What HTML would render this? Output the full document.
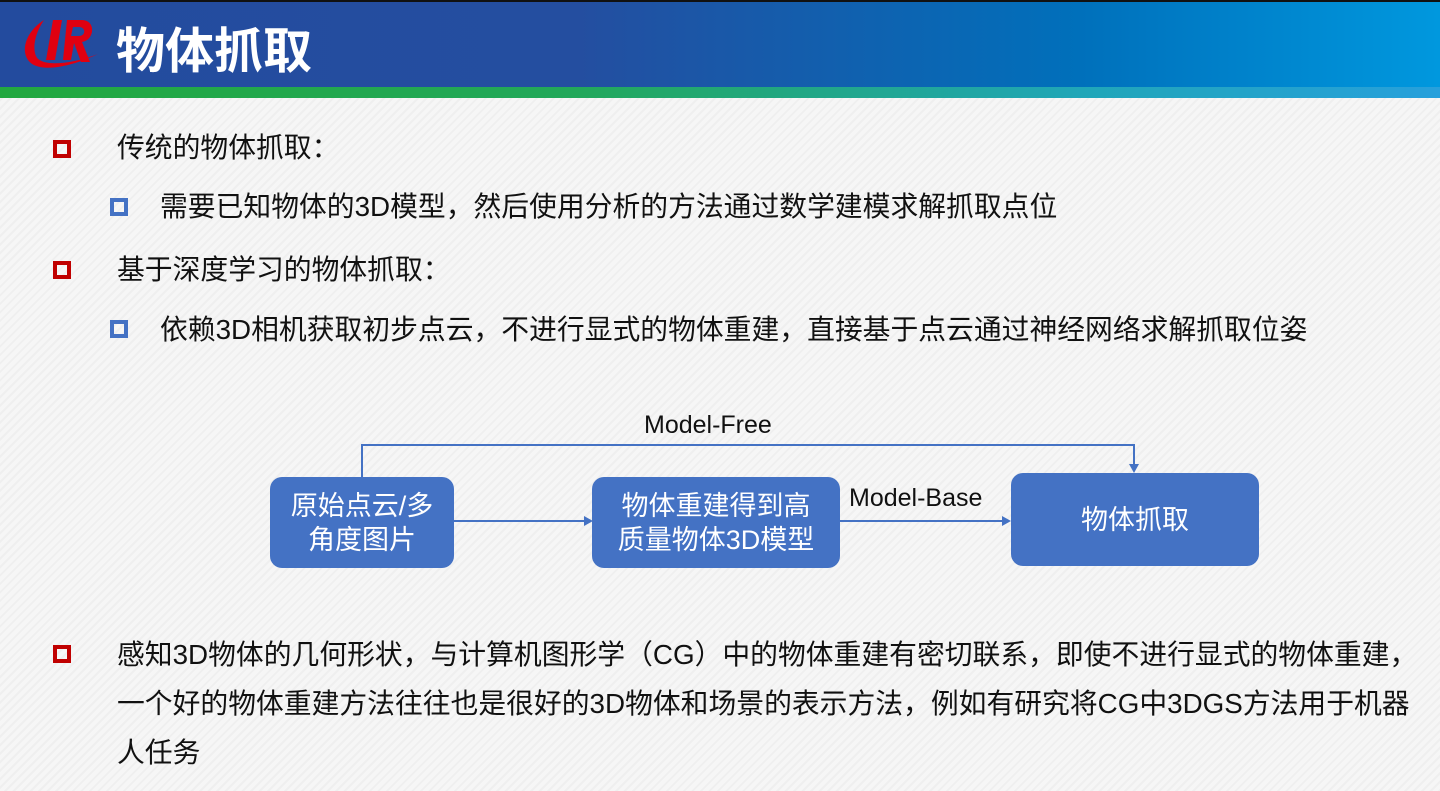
<!DOCTYPE html>
<html><head><meta charset="utf-8"><style>
*{margin:0;padding:0;box-sizing:border-box}
body{width:1440px;height:791px;overflow:hidden;position:relative;font-family:"Liberation Sans","Noto Sans CJK SC",sans-serif;background:repeating-linear-gradient(135deg,#f6f6f6 0 4px,#efefef 4px 6px);color:#111}
.hdr{position:absolute;left:0;top:0;width:1440px;height:88px;background:linear-gradient(90deg,#234b9e 0%,#244ea0 40%,#0070bb 75%,#0098de 100%);border-top:2px solid #111}
.grn{position:absolute;left:0;top:87px;width:1440px;height:11px;background:linear-gradient(90deg,#22a83f 0%,#22a85a 40%,#20a6b8 75%,#27a0dc 100%)}
.title{position:absolute;left:116px;top:12px;font-size:49px;font-weight:bold;color:#fff;letter-spacing:0px;font-family:"Noto Sans CJK SC",sans-serif}
.t{position:absolute;font-size:27.8px;white-space:nowrap;line-height:30px}
.sq{position:absolute;width:18px;height:18px;border:4px solid #c00000}
.sq2{position:absolute;width:18px;height:18px;border:4px solid #4472c4}
.box{position:absolute;background:#4472c4;border-radius:12px;color:#fff;font-size:27px;text-align:center;display:flex;align-items:center;justify-content:center;line-height:34px}
.lbl{position:absolute;font-size:25px;white-space:nowrap}
</style></head><body>
<div class="hdr"></div><div class="grn"></div>
<svg style="position:absolute;left:20px;top:16px" width="80" height="56" viewBox="0 0 80 56">
<path d="M24 4 C8 14 0 32 8 44 C16 56 44 54 78 38 C46 50 20 50 16 40 C12 30 16 16 24 4Z" fill="#e00010"/>
<path d="M33 4 L42 4 L35 44 L26 44Z" fill="#e00010"/>
<path d="M47 4 L62 4 C76 4 75 24 62 26 L70 46 L61 46 L54 27 L51 44 L43 44Z M53 11 L51 20 L59 20 C66 20 66 11 59 11Z" fill="#e00010"/>
</svg>
<div class="title">物体抓取</div>

<div class="sq" style="left:53px;top:140px"></div>
<div class="t" style="left:117px;top:133px">传统的物体抓取：</div>
<div class="sq2" style="left:110px;top:198px"></div>
<div class="t" style="left:160px;top:192px">需要已知物体的3D模型，然后使用分析的方法通过数学建模求解抓取点位</div>
<div class="sq" style="left:53px;top:261px"></div>
<div class="t" style="left:117px;top:255px">基于深度学习的物体抓取：</div>
<div class="sq2" style="left:110px;top:320px"></div>
<div class="t" style="left:160px;top:315px">依赖3D相机获取初步点云，不进行显式的物体重建，直接基于点云通过神经网络求解抓取位姿</div>

<svg style="position:absolute;left:0;top:0" width="1440" height="791">
<g stroke="#4472c4" stroke-width="2" fill="none">
<path d="M362 477 V445 H1134 V466"/>
<path d="M453 521 H586"/>
<path d="M840 521 H1004"/>
</g>
<g fill="#4472c4">
<path d="M1129 464 L1139 464 L1134 473Z"/>
<path d="M584 516 L593 521 L584 526Z"/>
<path d="M1002 516 L1011 521 L1002 526Z"/>
</g>
</svg>
<div class="lbl" style="left:644px;top:411px">Model-Free</div>
<div class="lbl" style="left:849px;top:484px">Model-Base</div>
<div class="box" style="left:270px;top:477px;width:184px;height:91px">原始点云/多<br>角度图片</div>
<div class="box" style="left:592px;top:477px;width:248px;height:91px">物体重建得到高<br>质量物体3D模型</div>
<div class="box" style="left:1011px;top:473px;width:248px;height:93px">物体抓取</div>

<div class="sq" style="left:53px;top:645px"></div>
<div class="t" style="left:117px;top:640px">感知3D物体的几何形状，与计算机图形学（CG）中的物体重建有密切联系，即使不进行显式的物体重建，</div>
<div class="t" style="left:117px;top:689px">一个好的物体重建方法往往也是很好的3D物体和场景的表示方法，例如有研究将CG中3DGS方法用于机器</div>
<div class="t" style="left:117px;top:738px">人任务</div>
</body></html>
